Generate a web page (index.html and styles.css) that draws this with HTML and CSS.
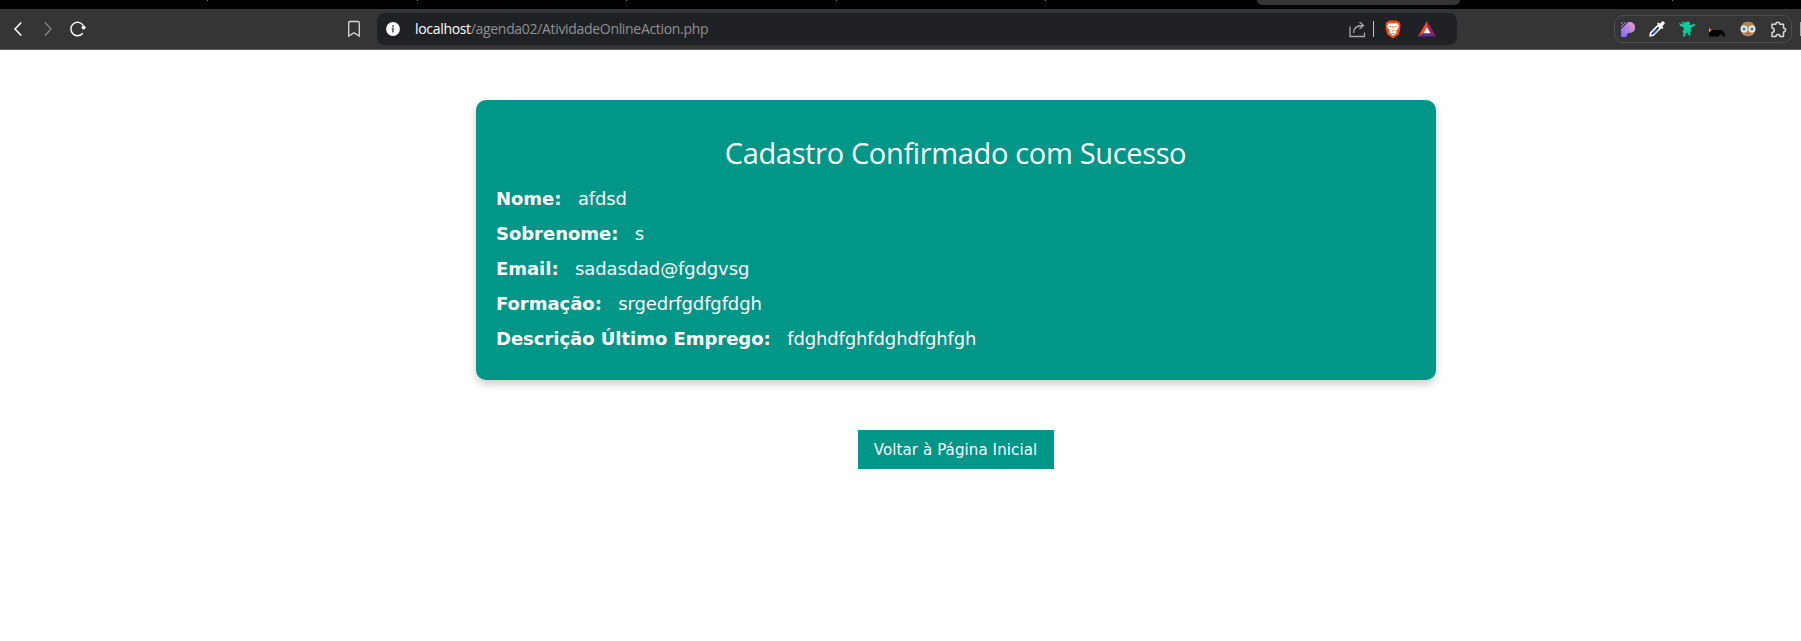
FILE: index.html
```
<!DOCTYPE html>
<html lang="pt-BR">
<head>
<meta charset="utf-8">
<title>Cadastro Confirmado</title>
<link rel="stylesheet" href="styles.css">
</head>
<body>
<div class="tabstrip">
  <i class="tick"></i><i class="tick"></i><i class="tick"></i><i class="tick"></i><i class="tick"></i><span class="active-tab"></span><i class="tick last"></i>
</div>
<header class="toolbar">
  <nav class="nav">
    <svg width="100" height="40" viewBox="0 0 100 40" fill="none">
      <path d="M21.300 13.500 15 20l6.300 6.500" stroke="#fff" stroke-width="1.500"/>
      <path d="M45 13.500 51 20l-6 6.500" stroke="#858585" stroke-width="1.300"/>
      <path d="M82.800 24.200A6.700 6.700 0 1 1 83.300 16.500" stroke="#fff" stroke-width="1.400"/>
      <circle cx="83.600" cy="18.500" r="2" fill="#fff"/>
    </svg>
  </nav>
  <svg class="bookmark" width="14" height="18" viewBox="0 0 14 18" fill="none"><path d="M1.700 16V2.800q0-1.300 1.300-1.300h8q1.300 0 1.300 1.300V16L7 12.700z" stroke="#d8d8d8" stroke-width="1.300"/></svg>
  <div class="address">
    <svg class="info" width="14" height="14" viewBox="0 0 14 14"><circle cx="7" cy="7" r="6.900" fill="#fff"/><path d="M7 3.200v1.700M5.700 6.500H7v4" stroke="#55565a" stroke-width="1.600" fill="none"/></svg>
    <div class="url"><span class="host">localhost</span><span class="path">/agenda02/AtividadeOnlineAction.php</span></div>
    <svg class="share" width="17" height="17" viewBox="0 0 17 17" fill="none" stroke="#a5a6a8" stroke-width="1.300"><path d="M1 5.500V15.500H15.500V11.500M4.500 12Q4.500 4.500 14 4.500M10.500 1l4 3.500-4 3.500"/></svg>
    <span class="divider"></span>
    <svg class="brave" width="16" height="19" viewBox="0 0 16 19"><path d="M4.200.5h7.600l1.300 1.300 1.600.3.900 2.800-.5 1.200.3 2.200-1.700 6.200L8 18.500l-5.700-4L.6 8.300l.3-2.200-.5-1.200.9-2.800 1.600-.3z" fill="#fb4b0d"/><path d="m4 3 4 .6L12 3l1.900 2.700-.8 2.500-1.800 2.500.3 2.300L8 15.800 4.400 13l.3-2.300-1.800-2.500-.8-2.500z" fill="#fff"/><path d="m4.300 6.300 2.200.6M11.700 6.300l-2.200.6M8 6v2.600M6.700 10.400 8 11l1.300-.6M6.700 13 8 13.700l1.300-.7" stroke="#fb4b0d" stroke-width=".8" fill="none"/></svg>
    <svg class="bat" width="18" height="16" viewBox="0 0 18 16"><path d="M9 0 0 15.500l5.700-3.300L9 6z" fill="#ff4b20"/><path d="m9 0 9 15.500-5.700-3.300L9 6z" fill="#9e1f63"/><path d="m0 15.500 5.700-3.300h6.600l5.700 3.300z" fill="#662d91"/><path d="m9 6 3.500 6.300h-7z" fill="#fff"/></svg>
  </div>
  <div class="extensions">
    <svg width="14" height="15" viewBox="0 0 14 15"><defs><linearGradient id="petal" x1="1" y1="0" x2="0" y2="1"><stop stop-color="#f2a0c6"/><stop offset="1" stop-color="#7667ff"/></linearGradient></defs><path d="M0 15V7L7 0h2a5 5 0 0 1 5 5v1a5 5 0 0 1-5 5H8q-2 0-2 2l-1 2z" fill="url(#petal)"/><path d="m0 2 2-2M0 5l5-5M0 8l8-8" stroke="#b981e8"/><path d="m0 6.500 6.500-6.500" stroke="#343434" stroke-width=".7"/></svg>
    <svg width="16" height="16" viewBox="0 0 16 16"><path d="m1.200 14.800.5-3L9 4.500 11.500 7l-7.300 7.300z" fill="#26334d" stroke="#fff" stroke-width="1.700"/><path d="M3.500 12.500 8 8l1 1-4.500 4.500z" fill="#315cf5"/><path d="m8 2.500 1.500-1 1.300 1.200L13 .6q1.300-.7 2.200.3t.2 2.200l-2.200 2.100 1.300 1.500-1.300 1.300z" fill="#fff"/></svg>
    <svg width="16" height="16" viewBox="0 0 16 16"><path d="m0 1.800 3.800 1.700L3 .3l2.500 1.200L9.500.2 11 2l-.5 2 5.500-1v1.500L11.500 7l.7 3-1.200 1 .8 3-1.800.8L8.300 11.500l-1.600 1-.7 3-2 .2L4.500 12l-1-1.500L5 8.300 4.500 6.500 1.200 5z" fill="#05cf99"/></svg>
    <svg width="17" height="16" viewBox="0 0 17 16"><path d="M0 6.500 2.300 9 0 13z" fill="#ff8a00"/><path d="M0 11.500 3 9h9l2 .7 2.500 5.800h-2L12 12.800l-2.500 2.700H0z" fill="#050505"/></svg>
    <svg width="16" height="16" viewBox="0 0 16 16"><circle cx="8" cy="8" r="7.300" fill="#c38a62"/><path d="M1 6a7.300 7.300 0 0 1 14 0L8 4.500z" fill="#a98557"/><circle cx="4" cy="8" r="2.600" fill="#558497" stroke="#e8f5f8" stroke-width="1.700"/><circle cx="12" cy="8" r="2.600" fill="#558497" stroke="#e8f5f8" stroke-width="1.700"/><path d="M6 12.700h4" stroke="#965940"/></svg>
    <svg width="17" height="17" viewBox="0 0 17 17"><path d="M2 3.300h3.800a2 2 0 0 1 4 0h3.700V7a2 2 0 0 1 0 4v4.500H10q0-2-2-2t-2 2H2V11.500q2.200 0 2.200-2.200T2 7z" fill="none" stroke="#d9d9d9" stroke-width="1.500" stroke-linejoin="round"/></svg>
  </div>
  <span class="cutoff"></span>
</header>
<main class="page">
  <section class="card">
    <h2 class="title">Cadastro Confirmado com Sucesso</h2>
    <p class="row"><b>Nome:</b><span>afdsd</span></p>
    <p class="row"><b>Sobrenome:</b><span>s</span></p>
    <p class="row"><b>Email:</b><span>sadasdad@fgdgvsg</span></p>
    <p class="row"><b>Formação:</b><span>srgedrfgdfgfdgh</span></p>
    <p class="row"><b>Descrição Último Emprego:</b><span>fdghdfghfdghdfghfgh</span></p>
  </section>
  <a class="button">Voltar à Página Inicial</a>
</main>
</body>
</html>
```

FILE: styles.css
```
* { box-sizing: border-box; }
body { margin: 0; width: 1801px; height: 641px; overflow: hidden; background: #fff; font-family: Verdana, "DejaVu Sans", sans-serif; }
svg { display: block; flex: none; }
.tabstrip { display: flex; height: 9px; padding-left: 207px; background: #000; }
.tick { width: 1px; height: 1px; margin-right: 208.5px; background: #777; flex: none; }
.active-tab { width: 203px; height: 5px; border-radius: 0 0 6px 6px; background: #353535; flex: none; }
.tick.last { margin: 0 0 0 212px; }
.tick:nth-child(5) { margin-right: 211px; }
.toolbar { display: flex; align-items: center; height: 41px; background: #353535; border-bottom: 1px solid #606060; }
.nav { width: 347px; flex: none; }
.bookmark { margin-right: 16px; }
.address { display: flex; align-items: center; width: 1080px; height: 32px; padding: 0 21px 0 9px; border-radius: 8px; background: #202124; flex: none; }
.url { flex: 1; margin-left: 15px; font: 14px/20px "Segoe UI", "Open Sans", sans-serif; white-space: nowrap; letter-spacing: -.32px; }
.host { color: #fff; }
.path { color: #8f9092; }
.divider { width: 1px; height: 16px; margin: 0 11px 0 7px; background: #c4c4c4; }
.bat { margin-left: 17px; }
.extensions { display: flex; align-items: center; justify-content: space-between; width: 178px; height: 28px; margin-left: 157px; padding: 0 4px 0 6px; border: 1px solid #4e4e4e; border-radius: 9px; flex: none; }
.cutoff { width: 1px; height: 14px; margin-left: auto; background: #aaa; }
.page { display: flex; flex-direction: column; align-items: center; padding: 50px 0 0 110px; }
.card { width: 960px; height: 280px; padding: 30px 20px 0; border-radius: 10px; background: #009688; color: #fff; box-shadow: 0 4px 8px rgba(0,0,0,.2); }
.title { margin: 0 0 6px; font: 400 29px/45px "Segoe UI", "Open Sans", sans-serif; letter-spacing: -.34px; text-align: center; white-space: nowrap; }
.row { display: flex; gap: 16.500px; margin: 0 0 0 .500px; font-size: 18px; line-height: 35px; white-space: nowrap; }
.row b { letter-spacing: -.03px; }
.row span { letter-spacing: -.13px; }
.button { width: 196px; height: 39px; margin-top: 50px; padding-top: 1px; background: #009688; color: #fff; font-size: 15px; line-height: 39px; letter-spacing: .11px; text-align: center; white-space: nowrap; }
```
